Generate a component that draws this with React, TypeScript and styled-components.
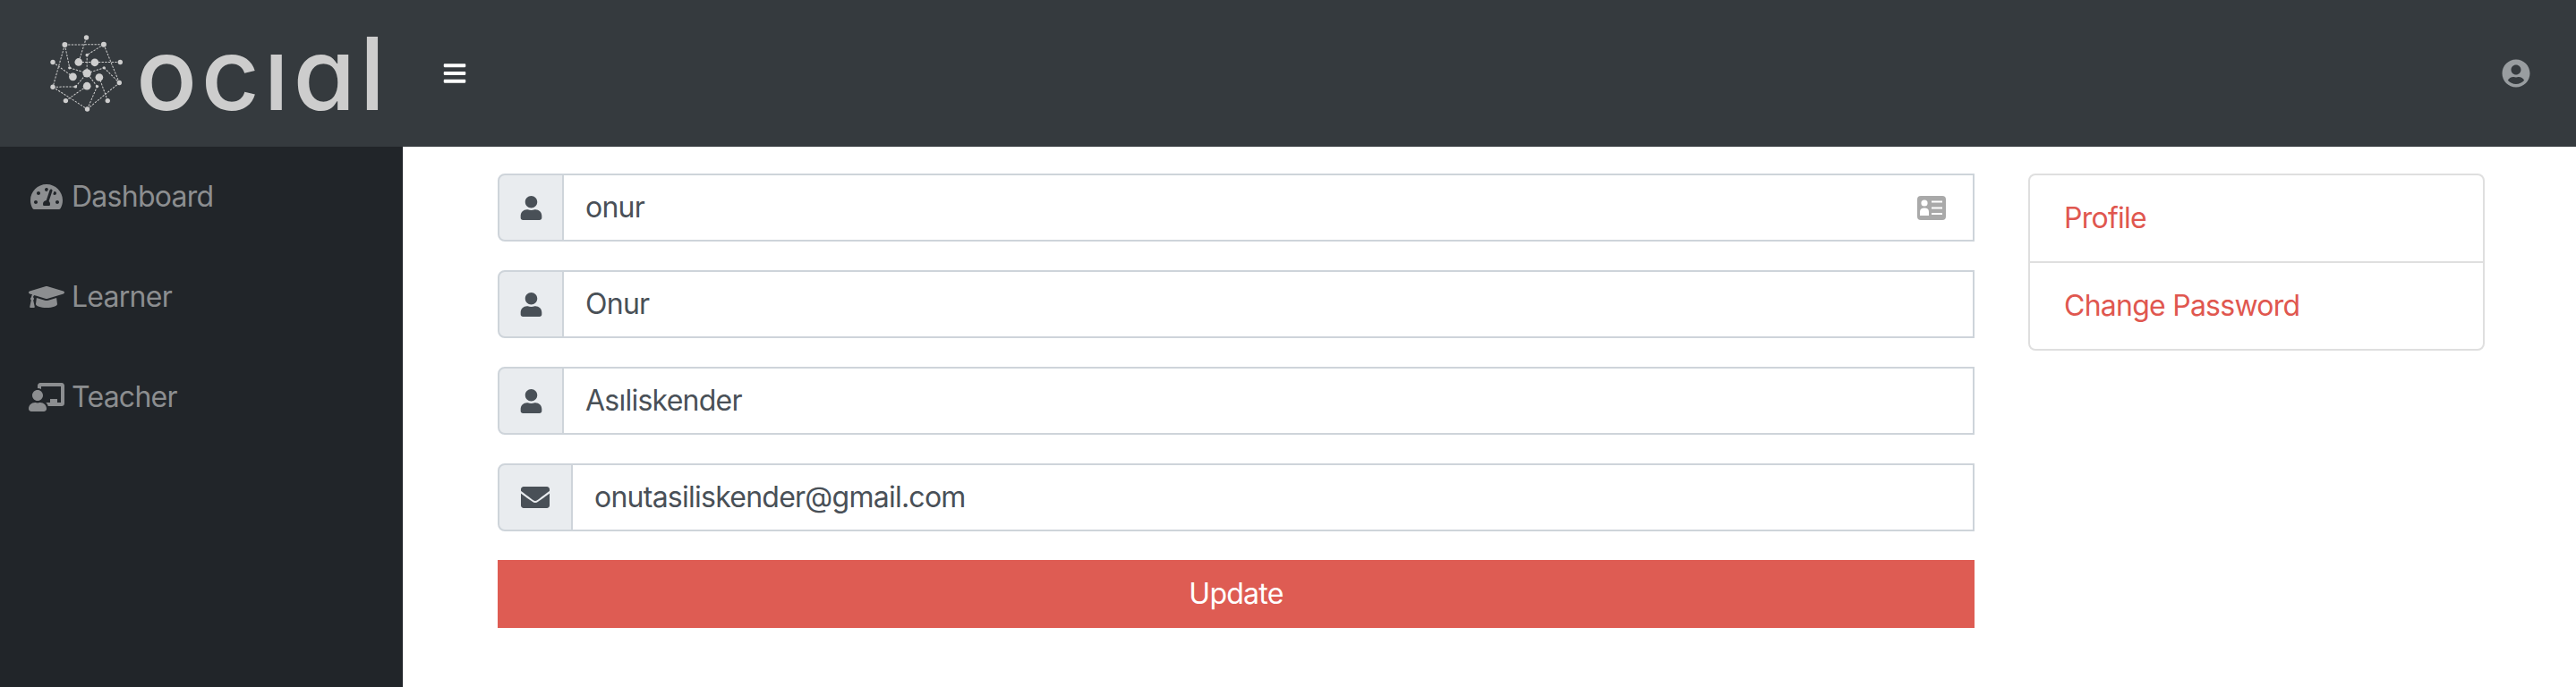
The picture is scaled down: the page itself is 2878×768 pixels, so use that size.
import type { ReactNode } from 'react'
import styled, { createGlobalStyle } from 'styled-components'
import {
  FaBars,
  FaChalkboardTeacher,
  FaEnvelope,
  FaGraduationCap,
  FaTachometerAlt,
  FaUser,
  FaUserCircle,
} from 'react-icons/fa'

const GlobalStyle = createGlobalStyle`
  html, body {
    margin: 0;
    padding: 0;
    background: #fff;
    font-family: Inter, "Liberation Sans", sans-serif;
    font-size: 32px;
    line-height: 48px;
    letter-spacing: -0.75px;
    color: #495057;
    overflow: hidden;
  }
  * { box-sizing: border-box; }
`

const StyledPage = styled.div`
  display: flex;
  flex-direction: column;
  height: 768px;
`

const StyledTopbar = styled.header`
  flex: 0 0 164px;
  display: flex;
  align-items: center;
  padding: 0 51px 0 56px;
  background: #353a3e;
`

const StyledBrand = styled.div`
  display: flex;
  align-items: baseline;
  gap: 14px;
  width: 438px;
`

const StyledBrandMark = styled.svg`
  width: 82px;
  height: 86px;
  flex: none;
  align-self: center;
`

const StyledBrandName = styled.span`
  font-size: 113px;
  font-weight: 500;
  line-height: 86px;
  letter-spacing: 4.5px;
  color: #cdcdcd;
`

const StyledMenuButton = styled.button`
  display: flex;
  padding: 0;
  border: 0;
  background: none;
  color: #fff;
  font-size: 28px;
`

const StyledAccount = styled.div`
  display: flex;
  margin-left: auto;
  color: #999da0;
  font-size: 32px;
`

const StyledBody = styled.div`
  flex: 1;
  display: flex;
  min-height: 0;
`

const StyledSidebar = styled.nav`
  flex: 0 0 450px;
  padding-left: 32px;
  background: #212529;
`

const StyledNavItem = styled.a`
  display: flex;
  align-items: center;
  gap: 8px;
  height: 112px;
  color: #8c8e90;
`

const StyledNavIcon = styled.span<{ $size: number }>`
  display: flex;
  justify-content: center;
  width: 40px;
  font-size: ${(p) => p.$size}px;
`

const StyledMain = styled.main`
  flex: 1;
  display: flex;
  align-items: flex-start;
  gap: 60px;
  padding: 30px 102px 0 106px;
`

const StyledForm = styled.form`
  flex: 1;
  display: flex;
  flex-direction: column;
  gap: 32px;
`

const StyledInputGroup = styled.div`
  display: flex;
  height: 76px;
`

const StyledAddon = styled.span<{ $width: number; $iconSize: number }>`
  display: flex;
  align-items: center;
  justify-content: center;
  flex: none;
  width: ${(p) => p.$width}px;
  background: #e9ecef;
  border: 2px solid #ced4da;
  border-radius: 8px 0 0 8px;
  font-size: ${(p) => p.$iconSize}px;
  color: #495057;
`

const StyledField = styled.div`
  flex: 1;
  display: flex;
  align-items: center;
  justify-content: space-between;
  padding: 0 30px 0 24px;
  margin-left: -2px;
  border: 2px solid #ced4da;
  background: #fff;
`

const StyledSubmit = styled.button`
  height: 76px;
  border: 0;
  background: #de5c53;
  color: #fff;
  font: inherit;
  letter-spacing: inherit;
`

const StyledSideMenu = styled.aside`
  flex: 0 0 510px;
  border: 2px solid #dfdfdf;
  border-radius: 8px;
`

const StyledSideLink = styled.a`
  display: block;
  padding: 24px 38px;
  color: #e0574f;
  & + & {
    border-top: 2px solid #dfdfdf;
  }
`

const marks = {
  nodes: [
    [97, 83, 9], [227, 82, 9], [279, 210, 8], [172, 298, 8], [57, 224, 8],
    [169, 59, 8], [57, 141, 8], [282, 141, 8], [100, 270, 8], [240, 270, 8],
    [143, 141, 13], [197, 142, 13], [171, 178, 14], [124, 190, 13], [212, 192, 13], [171, 221, 13],
    [171, 117, 5], [113, 160, 5], [228, 160, 5], [133, 223, 5], [205, 222, 5],
  ],
  links: [
    [97, 83, 227, 82], [97, 83, 113, 160], [97, 83, 57, 224], [227, 82, 171, 117], [227, 82, 279, 210],
    [171, 117, 171, 178], [169, 59, 143, 141], [57, 141, 124, 190], [113, 160, 171, 178], [171, 178, 228, 160],
    [282, 141, 197, 141], [143, 141, 197, 141], [228, 160, 279, 210], [57, 224, 133, 223], [133, 223, 171, 178],
    [172, 298, 205, 222], [205, 222, 171, 178], [57, 224, 172, 298], [172, 298, 279, 210], [100, 270, 171, 221],
    [240, 270, 212, 192],
  ],
}

const BrandMark = () => (
  <StyledBrandMark viewBox="48 50 245 257">
    {marks.links.map(([x1, y1, x2, y2]) => (
      <line key={`${x1}-${y1}-${x2}-${y2}`} x1={x1} y1={y1} x2={x2} y2={y2} stroke="#cdcdcd" strokeWidth="3" strokeDasharray="7 4" />
    ))}
    {marks.nodes.map(([cx, cy, r]) => (
      <circle key={`${cx}-${cy}`} cx={cx} cy={cy} r={r} fill="#cdcdcd" />
    ))}
  </StyledBrandMark>
)

const ContactCard = () => (
  <svg width="32" height="27" viewBox="0 0 32 27" aria-hidden="true">
    <rect width="32" height="27" rx="4" fill="#a9a9a9" />
    <circle cx="8" cy="8" r="3.6" fill="#fff" />
    <path d="M3 22v-4.500c0-2.500 2-4 5-4s5 1.500 5 4V22z" fill="#fff" />
    <path d="M16 5.500h12v2H16zM16 12.500h12v2H16zM16 19h12v2H16z" fill="#fff" />
  </svg>
)

const navItems: { label: string; icon: ReactNode; size: number }[] = [
  { label: 'Dashboard', icon: <FaTachometerAlt />, size: 36 },
  { label: 'Learner', icon: <FaGraduationCap />, size: 40 },
  { label: 'Teacher', icon: <FaChalkboardTeacher />, size: 40 },
]

const fields = [
  { value: 'onur', hint: true },
  { value: 'Onur' },
  { value: 'Asıliskender' },
]

export default function App() {
  return (
    <StyledPage>
      <GlobalStyle />
      <StyledTopbar>
        <StyledBrand>
          <BrandMark />
          <StyledBrandName>ocıɑl</StyledBrandName>
        </StyledBrand>
        <StyledMenuButton type="button" aria-label="Menu">
          <FaBars />
        </StyledMenuButton>
        <StyledAccount>
          <FaUserCircle />
        </StyledAccount>
      </StyledTopbar>
      <StyledBody>
        <StyledSidebar>
          {navItems.map((item) => (
            <StyledNavItem key={item.label}>
              <StyledNavIcon $size={item.size}>{item.icon}</StyledNavIcon>
              {item.label}
            </StyledNavItem>
          ))}
        </StyledSidebar>
        <StyledMain>
          <StyledForm>
            {fields.map((field) => (
              <StyledInputGroup key={field.value}>
                <StyledAddon $width={74} $iconSize={27}>
                  <FaUser />
                </StyledAddon>
                <StyledField>
                  {field.value}
                  {field.hint && <ContactCard />}
                </StyledField>
              </StyledInputGroup>
            ))}
            <StyledInputGroup>
              <StyledAddon $width={84} $iconSize={32}>
                <FaEnvelope />
              </StyledAddon>
              <StyledField>onutasiliskender@gmail.com</StyledField>
            </StyledInputGroup>
            <StyledSubmit type="button">Update</StyledSubmit>
          </StyledForm>
          <StyledSideMenu>
            <StyledSideLink>Profile</StyledSideLink>
            <StyledSideLink>Change Password</StyledSideLink>
          </StyledSideMenu>
        </StyledMain>
      </StyledBody>
    </StyledPage>
  )
}
